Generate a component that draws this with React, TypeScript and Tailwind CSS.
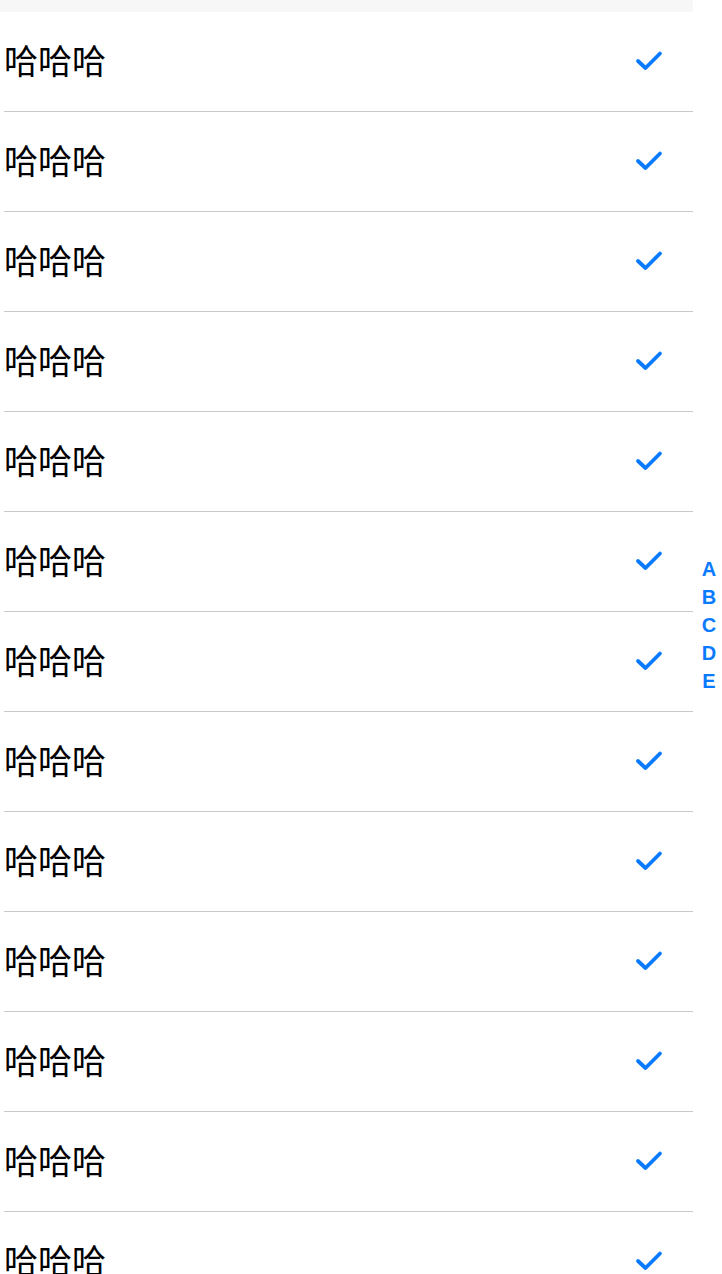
import React from 'react';

const rows = Array.from({ length: 13 }, (_, i) => i);
const letters = ['A', 'B', 'C', 'D', 'E'];

function Check() {
  return (
    <svg width="28" height="24" viewBox="0 0 28 24" fill="none">
      <path d="M3 13 L10.5 20 L25 5.5" stroke="#0a7aff" strokeWidth="3.8" strokeLinecap="round" strokeLinejoin="round" />
    </svg>
  );
}

export default function App() {
  return (
    <div className="relative w-[722px] h-[1274px] overflow-hidden bg-white" style={{ fontFamily: '"Noto Sans CJK SC", "Liberation Sans", sans-serif' }}>
      <div className="w-[693px]">
        <div className="h-[12px] bg-[#f7f7f7]" />
        {rows.map(i => (
          <div key={i} className="ml-[4px] h-[100px] pb-[3px] flex items-center justify-between border-b border-[#c8c7cc]">
            <span className="text-[34px] leading-none text-black">哈哈哈</span>
            <span className="mr-[30px] flex items-center"><Check /></span>
          </div>
        ))}
      </div>
      <div className="absolute right-0 top-[555px] w-[26px] flex flex-col items-center">
        {letters.map(l => (
          <span key={l} className="h-[28px] leading-[28px] text-[20px] font-bold text-[#0a7aff]" style={{ fontFamily: '"Liberation Sans", sans-serif' }}>{l}</span>
        ))}
      </div>
    </div>
  );
}
